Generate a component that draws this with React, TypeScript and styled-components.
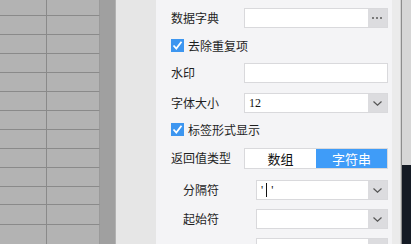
import React from 'react'
import styled, { createGlobalStyle } from 'styled-components'

const GlobalStyle = createGlobalStyle`
  html, body {
    margin: 0;
    padding: 0;
    background: #f4f4f6;
  }
  body {
    font-family: 'Noto Sans CJK SC', 'Noto Sans', sans-serif;
    font-size: 12px;
    color: #1f1f1f;
  }
`

const Frame = styled.div`
  display: flex;
  width: 411px;
  height: 244px;
  overflow: hidden;
`

const Sheet = styled.div`
  width: 100px;
  flex-shrink: 0;
  background: #b3b3b3;
  display: flex;
  flex-direction: column;
`

const SheetRow = styled.div<{ h: number }>`
  display: flex;
  flex-shrink: 0;
  height: ${({ h }) => h}px;
  border-bottom: 1px solid #8a8a8a;
  border-right: 1px solid #9a9a9a;
`

const SheetCell = styled.div<{ w?: number }>`
  height: 100%;
  ${({ w }) => (w ? `width: ${w}px; border-right: 1px solid #8a8a8a;` : 'flex: 1;')}
`

const Splitter = styled.div`
  width: 15px;
  flex-shrink: 0;
  background: #a0a0a0;
  border-right: 1px solid #b2b2b2;
`

const Gutter = styled.div`
  width: 40px;
  flex-shrink: 0;
  background: #e6e6e6;
`

const Panel = styled.div`
  width: 236px;
  flex-shrink: 0;
  background: #f4f4f6;
  box-sizing: border-box;
  padding: 8px 4px 0 15px;
  display: flex;
  flex-direction: column;
`

const Track = styled.div`
  width: 8px;
  flex-shrink: 0;
  background: #ebebeb;
  border-right: 1px solid #d2d2d2;
`

const Edge = styled.div`
  flex: 1;
  border-left: 1px solid #8c8c8c;
  display: flex;
  flex-direction: column;
`

const EdgeTop = styled.div`
  height: 165px;
  background: #d6d6d6;
`

const EdgeBottom = styled.div`
  flex: 1;
  background: #141a24;
`

const Row = styled.div<{ top: number; indent?: boolean }>`
  display: flex;
  align-items: center;
  height: 20px;
  flex-shrink: 0;
  margin-top: ${({ top }) => top}px;
  padding-left: ${({ indent }) => (indent ? 12 : 0)}px;
`

const Label = styled.div`
  width: 73px;
  flex-shrink: 0;
  font-size: 12px;
  line-height: 20px;
  white-space: nowrap;
`

const Field = styled.div<{ w?: number }>`
  display: flex;
  width: ${({ w }) => w ?? 144}px;
  height: 20px;
  box-sizing: border-box;
  border: 1px solid #d9d9dc;
  background: #fff;
`

const Value = styled.div`
  flex: 1;
  padding-left: 4px;
  font-family: 'Liberation Serif', serif;
  font-size: 12px;
  line-height: 18px;
  color: #111;
`

const Addon = styled.div`
  width: 19px;
  height: 100%;
  background: #dcdcdf;
  display: flex;
  align-items: center;
  justify-content: center;
`

const Caret = styled.span`
  display: inline-block;
  width: 1px;
  height: 14px;
  background: #111;
  vertical-align: -3px;
  margin: 0 4px 0 3px;
`

const CheckRow = styled.label`
  display: flex;
  align-items: center;
  gap: 4px;
  font-size: 12px;
`

const Box = styled.span`
  width: 13px;
  height: 13px;
  background: #3d96f0;
  display: flex;
  align-items: center;
  justify-content: center;
`

const Segments = styled.div`
  display: flex;
  width: 144px;
  height: 21px;
  box-sizing: border-box;
  border: 1px solid #d9d9dc;
`

const Segment = styled.div<{ active?: boolean }>`
  flex: 1;
  display: flex;
  align-items: center;
  justify-content: center;
  font-size: 13px;
  background: ${({ active }) => (active ? '#3f9cf8' : '#fff')};
  color: ${({ active }) => (active ? '#fff' : '#111')};
`

const Dots = () => (
  <svg width="11" height="3" viewBox="0 0 11 3">
    <rect x="0" y="0" width="2" height="2" fill="#7a7a7a" />
    <rect x="4" y="0" width="2" height="2" fill="#7a7a7a" />
    <rect x="8" y="0" width="2" height="2" fill="#7a7a7a" />
  </svg>
)

const Chevron = () => (
  <svg width="9" height="5" viewBox="0 0 9 5">
    <path d="M0.5 0.5 L4.5 4.2 L8.5 0.5" fill="none" stroke="#555" strokeWidth="1.2" />
  </svg>
)

const Check = () => (
  <svg width="11" height="11" viewBox="0 0 11 11">
    <path d="M1.5 5.5 L4.3 8.5 L9.5 1.8" fill="none" stroke="#fff" strokeWidth="1.8" />
  </svg>
)

const SHEET_ROWS = [15, 18, 18, 18, 18, 18, 18, 18, 18, 18, 17, 19, 30]

export default function App() {
  return (
    <>
      <GlobalStyle />
      <Frame>
        <Sheet>
          {SHEET_ROWS.map((h, i) => (
            <SheetRow key={i} h={h}>
              <SheetCell w={46} />
              <SheetCell />
            </SheetRow>
          ))}
        </Sheet>
        <Splitter />
        <Gutter />
        <Panel>
          <Row top={0}>
            <Label>数据字典</Label>
            <Field>
              <Value />
              <Addon>
                <Dots />
              </Addon>
            </Field>
          </Row>
          <Row top={7}>
            <CheckRow>
              <Box>
                <Check />
              </Box>
              去除重复项
            </CheckRow>
          </Row>
          <Row top={8}>
            <Label>水印</Label>
            <Field>
              <Value />
            </Field>
          </Row>
          <Row top={10}>
            <Label>字体大小</Label>
            <Field>
              <Value>12</Value>
              <Addon>
                <Chevron />
              </Addon>
            </Field>
          </Row>
          <Row top={6}>
            <CheckRow>
              <Box>
                <Check />
              </Box>
              标签形式显示
            </CheckRow>
          </Row>
          <Row top={9}>
            <Label>返回值类型</Label>
            <Segments>
              <Segment>数组</Segment>
              <Segment active>字符串</Segment>
            </Segments>
          </Row>
          <Row top={12} indent>
            <Label>分隔符</Label>
            <Field w={132}>
              <Value>
                '<Caret />'
              </Value>
              <Addon>
                <Chevron />
              </Addon>
            </Field>
          </Row>
          <Row top={9} indent>
            <Label>起始符</Label>
            <Field w={132}>
              <Value />
              <Addon>
                <Chevron />
              </Addon>
            </Field>
          </Row>
          <Row top={9} indent>
            <Label />
            <Field w={132}>
              <Value />
              <Addon>
                <Chevron />
              </Addon>
            </Field>
          </Row>
        </Panel>
        <Track />
        <Edge>
          <EdgeTop />
          <EdgeBottom />
        </Edge>
      </Frame>
    </>
  )
}
